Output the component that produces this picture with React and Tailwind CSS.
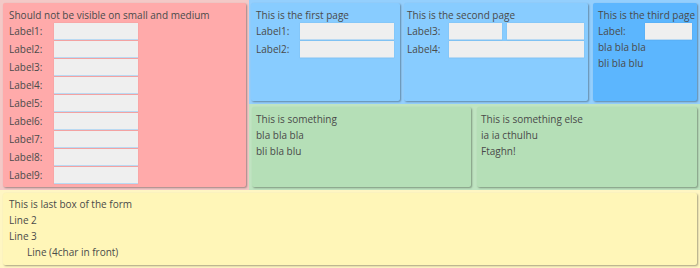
const card = 'rounded-[2px] shadow-[1px_1px_2px_rgba(0,0,0,0.35)]';

function Field({ className = '' }) {
  return <div className={`h-[17px] shrink-0 bg-[#efefef] border-b border-[#b9d9f2] shadow-[0_0_1px_rgba(0,0,0,0.15)] ${className}`} />;
}

function Row({ label, labelW, children }) {
  return (
    <div className="flex items-center h-[18px]">
      <span style={{ width: labelW }} className="shrink-0">{label}</span>
      {children}
    </div>
  );
}

export default function App() {
  const reds = ['Label1:', 'Label2:', 'Label3:', 'Label4:', 'Label5:', 'Label6:', 'Label7:', 'Label8:', 'Label9:'];
  return (
    <div className="w-[700px] h-[268px] bg-[#ede5e3] text-[10px] leading-[16px] text-[#4a4a4a] font-['Open_Sans',sans-serif] flex flex-col">
      <div className="flex h-[190px]">
        <div className="w-[249px] shrink-0 p-[3px] bg-[#f3c9c7]">
          <div className={`${card} h-full bg-[#ffaaaa] px-[6px] pt-[4px]`}>
            <div className="mb-[-1px]">Should not be visible on small and medium</div>
            <div className="flex flex-col">
              {reds.map((l) => (
                <Row key={l} label={l} labelW={45}>
                  <Field className="w-[84px]" />
                </Row>
              ))}
            </div>
          </div>
        </div>
        <div className="flex-1 min-w-0 flex flex-col">
          <div className="h-[104px] bg-[#94cffd] px-[2px] py-[3px] flex gap-[4px]">
            <div className={`${card} w-[149px] shrink-0 bg-[#88ccff] px-[5px] pt-[4px]`}>
              <div className="mb-[-1px]">This is the first page</div>
              <Row label="Label1:" labelW={44}>
                <Field className="w-[94px]" />
              </Row>
              <Row label="Label2:" labelW={44}>
                <Field className="w-[94px]" />
              </Row>
            </div>
            <div className={`${card} w-[184px] shrink-0 bg-[#88ccff] px-[3px] pt-[4px]`}>
              <div className="mb-[-1px]">This is the second page</div>
              <Row label="Label3:" labelW={42}>
                <Field className="w-[53px]" />
                <Field className="w-[77px] ml-[5px]" />
              </Row>
              <Row label="Label4:" labelW={42}>
                <Field className="w-[135px]" />
              </Row>
            </div>
            <div className={`${card} flex-1 min-w-0 ml-[1px] mr-[1px] bg-[#5cb6fe] px-[5px] pt-[4px]`}>
              <div className="mb-[-1px] whitespace-nowrap">This is the third page</div>
              <Row label="Label:" labelW={47}>
                <Field className="w-[47px]" />
              </Row>
              <div className="mt-[-1px]">bla bla bla</div>
              <div>bli bla blu</div>
            </div>
          </div>
          <div className="flex-1 bg-[#bfe4c1] p-[3px] flex gap-[6px]">
            <div className={`${card} w-[219px] shrink-0 bg-[#b5dfb7] px-[4px] pt-[4px]`}>
              <div>This is something</div>
              <div>bla bla bla</div>
              <div>bli bla blu</div>
            </div>
            <div className={`${card} flex-1 bg-[#b5dfb7] px-[4px] pt-[4px]`}>
              <div>This is something else</div>
              <div>ia ia cthulhu</div>
              <div>Ftaghn!</div>
            </div>
          </div>
        </div>
      </div>
      <div className="flex-1 bg-[#fff6c3] p-[3px]">
        <div className={`${card} h-full bg-[#fff6b8] px-[6px] pt-[3px]`}>
          <div>This is last box of the form</div>
          <div>Line 2</div>
          <div>Line 3</div>
          <div className="pl-[18px]">Line (4char in front)</div>
        </div>
      </div>
    </div>
  );
}
